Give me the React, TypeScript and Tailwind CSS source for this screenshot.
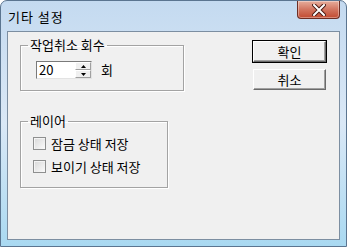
import React from 'react'

const font = { fontFamily: '"Noto Sans CJK KR", "Noto Sans", sans-serif' }

const Checkbox: React.FC<{ label: string }> = ({ label }) => (
  <label className="flex items-center h-[13px]">
    <span className="w-[13px] h-[13px] border border-[#8e8f8f] bg-gradient-to-br from-[#d8d8d8] to-[#fbfbfb] shadow-[inset_1px_1px_0_#f4f4f4]" />
    <span className="ml-[5px] text-[13px] leading-[14px] text-black">{label}</span>
  </label>
)

const SpinEdit: React.FC<{ value: string }> = ({ value }) => (
  <div className="flex w-[56px] h-[18px] border border-t-[#7a7a7a] border-l-[#7a7a7a] border-b-[#e3e3e3] border-r-[#e3e3e3] bg-white">
    <div className="flex-1 pl-[2px] text-[13px] leading-[16px] text-black">{value}</div>
    <div className="flex flex-col w-[16px] h-[16px] bg-[#f0f0f0]">
      <div className="flex-1 flex items-center justify-center border border-t-white border-l-white border-b-[#a0a0a0] border-r-[#a0a0a0]">
        <svg width="5" height="3" viewBox="0 0 5 3"><path d="M2.5 0L5 3H0z" fill="#000" /></svg>
      </div>
      <div className="flex-1 flex items-center justify-center border border-t-white border-l-white border-b-[#a0a0a0] border-r-[#a0a0a0]">
        <svg width="5" height="3" viewBox="0 0 5 3"><path d="M0 0H5L2.5 3z" fill="#000" /></svg>
      </div>
    </div>
  </div>
)

const Button: React.FC<{ label: string; isDefault?: boolean }> = ({ label, isDefault }) => (
  <button
    className={`w-[75px] h-[23px] bg-[#f0f0f0] text-[13px] text-black ${
      isDefault ? 'border border-black' : 'border border-transparent'
    }`}
  >
    <div className="w-full h-full flex items-center justify-center border border-t-white border-l-white border-b-[#6a6a6a] border-r-[#6a6a6a] shadow-[inset_-1px_-1px_0_#a0a0a0]">
      {label}
    </div>
  </button>
)

export default function App() {
  return (
    <div
      className="w-[347px] h-[247px] flex flex-col rounded-t-[7px] border border-[#5b7590] bg-gradient-to-b from-[#c4daf0] via-[#dae8f6] to-[#a9d9f1] overflow-hidden"
      style={font}
    >
      {/* Title bar */}
      <div className="h-[30px] flex justify-between items-start pl-[7px] pr-[6px]">
        <div className="mt-[8px] text-[13px] leading-[16px] tracking-[1px] text-black">기타 설정</div>
        <div className="w-[43px] h-[18px] flex items-center justify-center rounded-b-[4px] border border-t-0 border-[#6d2e24] bg-gradient-to-b from-[#e6ad9c] via-[#d27560] to-[#c24a30] shadow-[inset_0_0_0_1px_rgba(255,255,255,0.35)]">
          <svg width="14" height="12" viewBox="0 0 14 12">
            <path d="M2 1L12 11M12 1L2 11" stroke="#4a1a12" strokeWidth="4" strokeLinecap="square" />
            <path d="M2 1L12 11M12 1L2 11" stroke="#fff" strokeWidth="2" strokeLinecap="square" />
          </svg>
        </div>
      </div>

      {/* Client area */}
      <div className="flex-1 mx-[6px] mb-[6px] border border-[#7c8ea1] bg-[#f0f0f0] flex text-black">
        <div className="flex flex-col pl-[12px] pt-[6px]">
          <fieldset className="w-[164px] h-[53px] border border-[#a3a3a3] shadow-[1px_1px_0_#fff,inset_1px_1px_0_#fff]">
            <legend className="ml-[7px] px-[2px] text-[13px] leading-[14px]">작업취소 회수</legend>
            <div className="flex items-center pl-[15px] mt-[9px]">
              <SpinEdit value="20" />
              <span className="ml-[9px] text-[13px] leading-[14px]">회</span>
            </div>
          </fieldset>

          <fieldset className="mt-[23px] w-[148px] h-[74px] border border-[#a3a3a3] shadow-[1px_1px_0_#fff,inset_1px_1px_0_#fff]">
            <legend className="ml-[7px] px-[2px] text-[13px] leading-[14px]">레이어</legend>
            <div className="flex flex-col gap-[10px] pl-[12px] mt-[9px]">
              <Checkbox label="잠금 상태 저장" />
              <Checkbox label="보이기 상태 저장" />
            </div>
          </fieldset>
        </div>

        <div className="flex flex-col gap-[5px] ml-[68px] pt-[8px]">
          <Button label="확인" isDefault />
          <Button label="취소" />
        </div>
      </div>
    </div>
  )
}
